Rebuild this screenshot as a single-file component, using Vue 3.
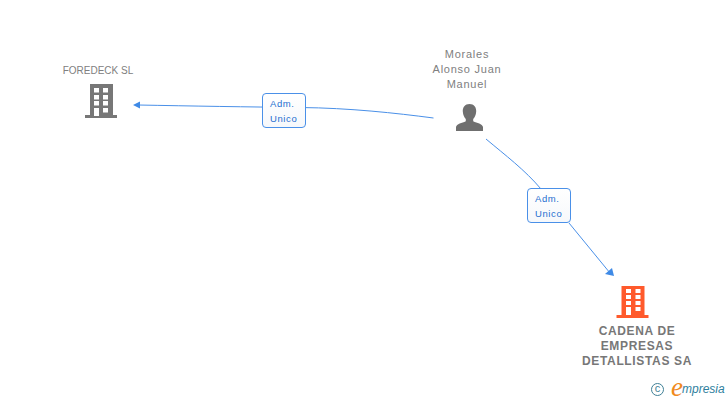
<script setup>
const nodes = [
  { cls: 'n1', lines: ['FOREDECK SL'] },
  { cls: 'n2', lines: ['Morales', 'Alonso Juan', 'Manuel'] },
  { cls: 'n3', lines: ['CADENA DE', 'EMPRESAS', 'DETALLISTAS SA'] }
]
const windows = [
  [94, 88], [103, 88], [94, 95], [103, 95], [94, 101], [103, 101], [103, 108]
]
</script>

<template>
  <div class="canvas">
    <svg class="art" width="728" height="400" viewBox="0 0 728 400">
      <g fill="none" stroke="#4a90e8" stroke-width="1">
        <path d="M433.5 118 C 395 113 350 108 300 107.5 C 250 107 190 106 138 105" />
        <path d="M486 139 C 505 155 525 170 541 189" />
        <path d="M569 223 L 610 273" />
      </g>
      <path d="M133 105 L140 101.5 L140 108.5 Z" fill="#3f8ae6" />
      <path d="M614 276 L605 274 L612 268 Z" fill="#3f8ae6" />

      <g fill="#777">
        <rect x="90" y="84" width="23" height="32" />
        <rect x="85" y="115" width="32" height="3" />
      </g>
      <g fill="#fff">
        <rect v-for="(w, i) in windows" :key="i" :x="w[0]" :y="w[1]" width="5" height="4.5" />
        <rect x="94" y="108" width="5" height="8" />
      </g>

      <path fill="#6f6f6f" d="M469.5 104 C465 104 462.5 107.5 462.8 111.5 C463 115 464.4 117.5 465.8 119 L465.8 121.2 C462 123.2 456.6 123.6 456 127 L456 131 L483 131 L483 127 C482.4 123.6 477 123.2 473.2 121.2 L473.2 119 C474.6 117.5 476 115 476.2 111.5 C476.5 107.5 474 104 469.5 104 Z" />

      <g transform="translate(531.5 -1)">
        <g fill="#ff5a2c">
          <rect x="90" y="287" width="23" height="30" />
          <rect x="85" y="316" width="32" height="3" />
        </g>
        <g fill="#fff">
          <rect x="94.5" y="290" width="5" height="4" />
          <rect x="104" y="290" width="5" height="4" />
          <rect x="94.5" y="296" width="5" height="4" />
          <rect x="104" y="296" width="5" height="4" />
          <rect x="94.5" y="302" width="5" height="4" />
          <rect x="104" y="302" width="5" height="4" />
          <rect x="94.5" y="308" width="5" height="8" />
          <rect x="104" y="308" width="5" height="4" />
        </g>
      </g>
    </svg>

    <div v-for="n in nodes" :key="n.cls" class="node" :class="n.cls">
      <div v-for="l in n.lines" :key="l">{{ l }}</div>
    </div>

    <div class="tag t1"><span>Adm.</span><span>Unico</span></div>
    <div class="tag t2"><span>Adm.</span><span>Unico</span></div>

    <div class="brand">
      <span class="copy">c</span>
      <span class="e">e</span><span class="rest">mpresia</span>
    </div>
  </div>
</template>

<style scoped>
.canvas {
  position: relative;
  width: 728px;
  height: 400px;
  overflow: hidden;
  background: #fff;
  font-family: "Liberation Sans", Arial, sans-serif;
}
.art {
  position: absolute;
  left: 0;
  top: 0;
}
.node {
  position: absolute;
  width: 140px;
  text-align: center;
  font-size: 11px;
  line-height: 15px;
  color: #808080;
  letter-spacing: 0.75px;
}
.n1 { left: 28px; top: 63px; font-size: 10px; letter-spacing: 0; }
.n2 { left: 397px; top: 47px; }
.n3 { left: 567px; top: 324px; font-size: 12px; font-weight: bold; letter-spacing: 0.65px; color: #777; }
.tag {
  position: absolute;
  width: 44px;
  height: 35px;
  box-sizing: border-box;
  border: 1px solid #4a90e8;
  border-radius: 4px;
  background: linear-gradient(#fff, #f6f8fb);
  color: #1f6fd0;
  font-size: 9.5px;
  line-height: 15px;
  letter-spacing: 0.6px;
  padding: 2px 0 0 7px;
  display: flex;
  flex-direction: column;
}
.t1 { left: 262px; top: 93px; }
.t2 { left: 527px; top: 188px; }
.brand {
  position: absolute;
  left: 651px;
  top: 378px;
  height: 22px;
  display: flex;
  align-items: center;
  white-space: nowrap;
}
.copy {
  width: 11px;
  height: 11px;
  border: 1.5px solid #3f7f96;
  border-radius: 50%;
  color: #3f7f96;
  font-size: 11px;
  line-height: 9px;
  text-align: center;
  margin-right: 7px;
}
.e {
  font-family: "Liberation Serif", serif;
  font-style: italic;
  font-size: 27px;
  color: #f08a1d;
  line-height: 20px;
  margin-top: -5px;
}
.rest {
  font-family: "Liberation Sans", sans-serif;
  font-style: italic;
  font-size: 12px;
  color: #2f7f9e;
  margin-left: -1px;
}
</style>
